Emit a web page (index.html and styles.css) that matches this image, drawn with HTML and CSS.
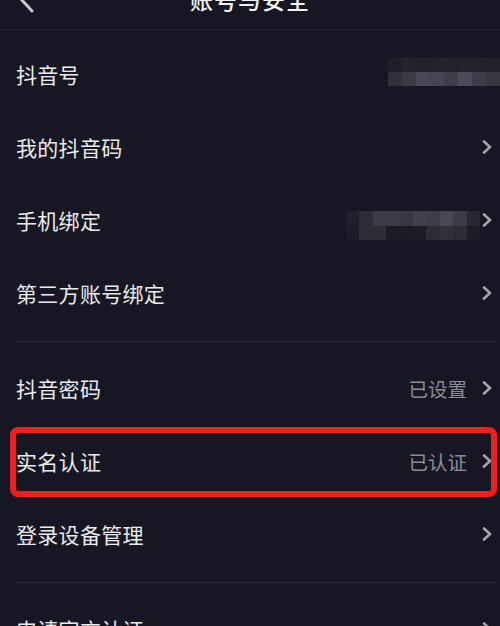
FILE: index.html
```html
<!DOCTYPE html>
<html lang="zh-CN">
<head>
<meta charset="utf-8">
<link rel="stylesheet" href="styles.css">
</head>
<body>
<div class="header">
  <svg class="back" width="20" height="20" viewBox="0 0 20 20"><path d="M4 -2 L16 11" stroke="#c6c6cb" stroke-width="3" stroke-linecap="round" fill="none"/></svg>
  <div class="title">账号与安全</div>
</div>
<div class="group first">
  <div class="row">
    <span class="label">抖音号</span>
    <div class="pix pix1">
      <div class="prow">
        <i style="background:#1e1f29"></i><i style="background:#22232d"></i><i style="background:#20212b"></i><i style="background:#22232d"></i><i style="background:#21222c"></i><i style="background:#22232d"></i><i style="background:#21222c"></i><i style="background:#1f202a"></i>
      </div>
      <div class="prow">
        <i style="background:#30313b"></i><i style="background:#3a3b45"></i><i style="background:#484954"></i><i style="background:#454651"></i><i style="background:#3d3e48"></i><i style="background:#4a4b56"></i><i style="background:#3c3d47"></i><i style="background:#363741"></i>
      </div>
    </div>
  </div>
  <div class="row">
    <span class="label">我的抖音码</span>
    <svg class="chev" width="10" height="14" viewBox="0 0 10 14"><path d="M2 1.5 L8 7 L2 12.5" fill="none" stroke="#a4a5aa" stroke-width="2.6" stroke-linecap="round" stroke-linejoin="round"/></svg>
  </div>
  <div class="row">
    <span class="label">手机绑定</span>
    <div class="pix pix3">
      <div class="prow">
        <i style="background:#1f2029"></i><i style="background:#2b2c36"></i><i style="background:#3a3b45"></i><i style="background:#3a3b45"></i><i style="background:#363741"></i><i style="background:#40414b"></i><i style="background:#3c3d47"></i><i style="background:#474852"></i><i style="background:#3a3b45"></i><i style="background:#262730"></i>
      </div>
      <div class="prow">
        <i style="background:#1b1c25"></i><i style="background:#2c2d37"></i><i style="background:#2c2d37"></i><i style="background:#1b1c25"></i><i style="background:#1a1b24"></i><i style="background:#1b1c25"></i><i style="background:#2b2c36"></i><i style="background:#2f303a"></i><i style="background:#2b2c36"></i><i style="background:#1c1d26"></i>
      </div>
    </div>
    <svg class="chev" width="10" height="14" viewBox="0 0 10 14"><path d="M2 1.5 L8 7 L2 12.5" fill="none" stroke="#a4a5aa" stroke-width="2.6" stroke-linecap="round" stroke-linejoin="round"/></svg>
  </div>
  <div class="row">
    <span class="label">第三方账号绑定</span>
    <svg class="chev" width="10" height="14" viewBox="0 0 10 14"><path d="M2 1.5 L8 7 L2 12.5" fill="none" stroke="#a4a5aa" stroke-width="2.6" stroke-linecap="round" stroke-linejoin="round"/></svg>
  </div>
</div>
<div class="sep"></div>
<div class="group">
  <div class="row">
    <span class="label">抖音密码</span>
    <span class="value">已设置</span>
    <svg class="chev" width="10" height="14" viewBox="0 0 10 14"><path d="M2 1.5 L8 7 L2 12.5" fill="none" stroke="#a4a5aa" stroke-width="2.6" stroke-linecap="round" stroke-linejoin="round"/></svg>
  </div>
  <div class="row marked">
    <span class="label">实名认证</span>
    <span class="value">已认证</span>
    <svg class="chev" width="10" height="14" viewBox="0 0 10 14"><path d="M2 1.5 L8 7 L2 12.5" fill="none" stroke="#a4a5aa" stroke-width="2.6" stroke-linecap="round" stroke-linejoin="round"/></svg>
    <div class="redbox"></div>
  </div>
  <div class="row">
    <span class="label">登录设备管理</span>
    <svg class="chev" width="10" height="14" viewBox="0 0 10 14"><path d="M2 1.5 L8 7 L2 12.5" fill="none" stroke="#a4a5aa" stroke-width="2.6" stroke-linecap="round" stroke-linejoin="round"/></svg>
  </div>
</div>
<div class="sep"></div>
<div class="group">
  <div class="row">
    <span class="label">申请官方认证</span>
    <svg class="chev" width="10" height="14" viewBox="0 0 10 14"><path d="M2 1.5 L8 7 L2 12.5" fill="none" stroke="#a4a5aa" stroke-width="2.6" stroke-linecap="round" stroke-linejoin="round"/></svg>
  </div>
</div>
</body>
</html>
```

FILE: styles.css
```css
html, body {
  margin: 0;
  padding: 0;
  background: #161722;
  height: 626px;
  overflow: hidden;
}
body {
  font-family: "Noto Sans CJK SC", "Noto Sans", sans-serif;
  color: #ebebed;
}
.header {
  position: relative;
  height: 60px;
  margin-top: -31px;
  border-bottom: 1px solid #23242e;
  display: flex;
  align-items: center;
  justify-content: center;
}
.back {
  position: absolute;
  left: 16px;
  top: 31px;
  overflow: visible;
}
.title {
  font-size: 23px;
  font-weight: 500;
  color: #f2f2f4;
  letter-spacing: 1px;
}
.group {
  padding: 12px 0 9px;
}
.group.first {
  padding-top: 10px;
}
.row {
  position: relative;
  height: 73px;
  box-sizing: border-box;
  display: flex;
  align-items: center;
  padding: 0 8px 5px 16px;
}
.label {
  font-size: 21px;
  flex: 1;
  letter-spacing: 0.3px;
}
.value {
  font-size: 19.5px;
  color: #8c8d93;
  margin-right: 15px;
}
.chev {
  display: block;
  flex: none;
}
.pix {
  display: flex;
  flex-direction: column;
}
.pix1 {
  margin-right: -8px;
  margin-top: -4px;
}
.pix3 {
  margin-right: 2px;
  margin-top: 11px;
}
.prow {
  display: flex;
}
.pix1 .prow i {
  display: block;
  width: 14px;
  height: 14px;
}
.pix3 .prow i {
  display: block;
  width: 13.4px;
  height: 14.5px;
}
.redbox {
  position: absolute;
  left: 10px;
  right: 3px;
  top: 0px;
  bottom: 3px;
  border: 6px solid #f11e1b;
  border-radius: 8px;
  pointer-events: none;
}
.sep {
  height: 1px;
  background: #282933;
  margin: 0 4px 0 16px;
}
```
